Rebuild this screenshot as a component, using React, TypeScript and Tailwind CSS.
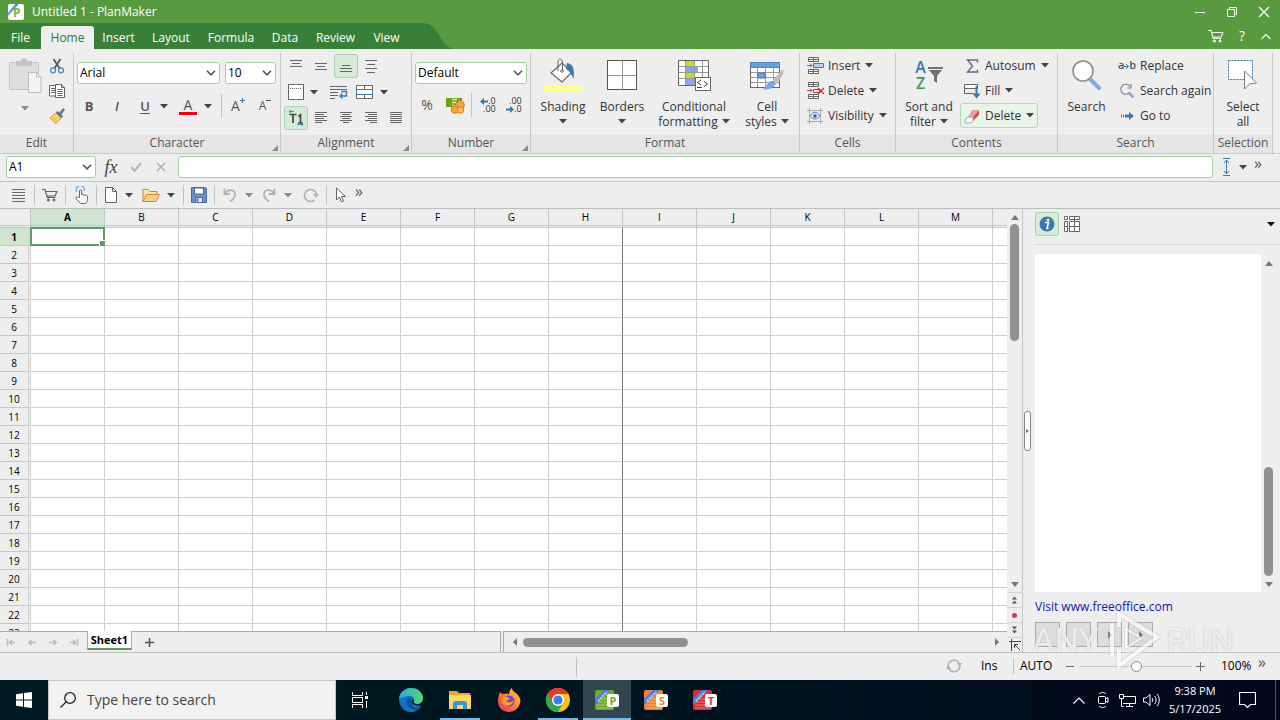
import type { ReactNode } from 'react';
import clsx from 'clsx';

const UI_FONT = "font-['Open_Sans','Noto_Sans',sans-serif]";
const COLUMNS = ['A', 'B', 'C', 'D', 'E', 'F', 'G', 'H', 'I', 'J', 'K', 'L', 'M'];
const ROWS = Array.from({ length: 23 }, (_, i) => i + 1);

const MENU_TABS = [
  { label: 'File', width: 'w-[41px]' },
  { label: 'Home', width: 'w-[53px]', active: true },
  { label: 'Insert', width: 'w-[49px]' },
  { label: 'Layout', width: 'w-14' },
  { label: 'Formula', width: 'w-16' },
  { label: 'Data', width: 'w-11' },
  { label: 'Review', width: 'w-[57px]' },
  { label: 'View', width: 'w-[45px]' },
];

interface IconProps {
  w?: number;
  h?: number;
  className?: string;
  stroke?: string;
  children: ReactNode;
}

function Icon({ w = 16, h = 16, className, stroke = '#666', children }: IconProps) {
  return (
    <svg
      width={w}
      height={h}
      viewBox={`0 0 ${w} ${h}`}
      fill="none"
      stroke={stroke}
      className={clsx('shrink-0', className)}
      aria-hidden="true"
    >
      {children}
    </svg>
  );
}

function Caret({ color = '#444' }: { color?: string }) {
  return (
    <Icon w={8} h={5} stroke="none">
      <path d="M0 0h8L4 4.5z" fill={color} />
    </Icon>
  );
}

function Chevron() {
  return (
    <Icon w={10} h={6} stroke="#555">
      <path d="M1 .8l4 4 4-4" strokeWidth="1.6" />
    </Icon>
  );
}

function Combo({ label, value, width }: { label: string; value: string; width: string }) {
  return (
    <div className={clsx('relative shrink-0', width)}>
      <select
        aria-label={label}
        defaultValue={value}
        className="block h-[22px] w-full appearance-none rounded-[3px] border border-[#a3cfa3] bg-white pl-[2px] text-xs text-black"
      >
        <option>{value}</option>
      </select>
      <span className="pointer-events-none absolute inset-y-0 right-1 flex items-center">
        <Chevron />
      </span>
    </div>
  );
}

interface ToolButtonProps {
  label: string;
  width?: string;
  active?: boolean;
  children: ReactNode;
}

function ToolButton({ label, width = 'w-6', active, children }: ToolButtonProps) {
  return (
    <button
      aria-label={label}
      className={clsx(
        'flex h-6 shrink-0 items-center justify-center rounded-[3px]',
        width,
        active && 'bg-[#d5ebd8] outline outline-[#a9d3ad] -outline-offset-1'
      )}
    >
      {children}
    </button>
  );
}

function Divider({ className }: { className?: string }) {
  return <span className={clsx('w-px shrink-0 bg-[#c2c2c2]', className)} />;
}

function Group({
  title,
  width,
  launcher,
  children,
}: {
  title: string;
  width: string;
  launcher?: boolean;
  children: ReactNode;
}) {
  return (
    <section className={clsx('flex shrink-0 flex-col border-r border-[#c8c8c8]', width)}>
      <div className="flex h-[82px] w-full">{children}</div>
      <div className="relative h-[18px] bg-[#e5e5e5] text-center text-xs leading-4 text-[#555]">
        {title}
        {launcher && (
          <span className="absolute right-[2px] bottom-[2px]">
            <Icon w={6} h={6} stroke="none">
              <path d="M6 0v6H0z" fill="#888" />
            </Icon>
          </span>
        )}
      </div>
    </section>
  );
}

function BigButton({
  lines,
  width,
  icon,
  caret = 'none',
}: {
  lines: string[];
  width: string;
  icon: ReactNode;
  caret?: 'none' | 'below' | 'inline';
}) {
  return (
    <button className={clsx('flex h-[78px] flex-col items-center text-xs leading-[15px] text-[#333]', width)}>
      <span className="mt-[3px] flex h-[38px] shrink-0 items-center justify-center">{icon}</span>
      <span className="mt-[5px] whitespace-nowrap">{lines[0]}</span>
      {lines[1] && (
        <span className="flex items-center gap-1 whitespace-nowrap">
          {lines[1]}
          {caret === 'inline' && <Caret />}
        </span>
      )}
      {caret === 'below' && (
        <span className="flex h-[15px] items-center">
          <Caret />
        </span>
      )}
    </button>
  );
}

function RowButton({
  label,
  icon,
  caret,
  active,
}: {
  label: string;
  icon: ReactNode;
  caret?: boolean;
  active?: boolean;
}) {
  return (
    <button
      className={clsx(
        'flex h-[25px] items-center gap-[5px] rounded-[3px] px-1 text-xs whitespace-nowrap text-[#333]',
        active && 'bg-[#e8f5e9] outline outline-[#b4dab7] -outline-offset-1'
      )}
    >
      <span className="flex w-4 shrink-0 justify-center">{icon}</span>
      {label}
      {caret && <Caret />}
    </button>
  );
}

// Text alignment glyph: each entry is [x1, x2, y]
function Lines({ rows }: { rows: number[][] }) {
  return (
    <Icon stroke="#666">
      {rows.map(([a, b, y]) => (
        <path key={y} d={`M${a} ${y}.5H${b}`} />
      ))}
    </Icon>
  );
}

function CartIcon({ stroke = '#666' }: { stroke?: string }) {
  return (
    <Icon stroke={stroke}>
      <path d="M0 2.500h3l2.200 8h8M3.600 4.500h11.200l-1.600 4.400-8.300.2" strokeWidth="1.200" />
      <circle cx="6.300" cy="13" r="1.100" fill={stroke} />
      <circle cx="12" cy="13" r="1.100" fill={stroke} />
    </Icon>
  );
}

function SmallArrow({ flip }: { flip?: boolean }) {
  return (
    <Icon w={8} h={7} stroke="none">
      <path d={flip ? 'M0 2.500h4V0l4 3.500L4 7V4.500H0z' : 'M8 2.500H4V0L0 3.500 4 7V4.500h4z'} fill="#3b78ad" />
    </Icon>
  );
}

function Ribbon() {
  return (
    <div className="flex shrink-0 overflow-hidden border-b border-[#b5d8b5] bg-[#eee] pt-1">
      <Group title="Edit" width="w-[74px]">
        <button aria-label="Paste" className="ml-2 flex w-[34px] shrink-0 flex-col items-center pt-[5px]">
          <Icon w={34} h={36} stroke="#c4c4c4">
            <rect x="1.500" y="4.500" width="29" height="27" rx="1" fill="#dedede" />
            <path d="M8 3h5c0-4 6-4 6 0h5v5H8z" fill="#c6c6c6" stroke="none" />
            <path d="M20.500 14.500h8l4.500 4.500v15.500H20.500z" fill="#f5f5f5" stroke="#bbb" />
            <path d="M28.500 14.500v4.500h4.500" stroke="#bbb" />
          </Icon>
          <span className="mt-3">
            <Caret color="#888" />
          </span>
        </button>
        <div className="ml-[3px] flex flex-col gap-px pt-px">
          <ToolButton label="Cut">
            <Icon>
              <path d="M4.500 1l6.200 9.500M11.500 1L5.300 10.500" stroke="#555" strokeWidth="1.700" />
              <circle cx="4" cy="12.300" r="2.500" stroke="#4a88b8" strokeWidth="1.300" />
              <circle cx="12" cy="12.300" r="2.500" stroke="#4a88b8" strokeWidth="1.300" />
            </Icon>
          </ToolButton>
          <ToolButton label="Copy">
            <Icon>
              <path d="M.5 2.500h7v10.500h-7z" fill="#fff" />
              <path d="M2 5.500h4M2 7.500h4M2 9.500h4" />
              <path d="M6.500 1.500h6l3 3v10h-9z" fill="#fff" />
              <path d="M12.500 1.500v3h3M8.500 6.500h5M8.500 8.500h5M8.500 10.500h5M8.500 12.500h5" />
            </Icon>
          </ToolButton>
          <ToolButton label="Format painter">
            <Icon>
              <path d="M1 10L7 5l5 5-5 5.500z" fill="#f8d27c" stroke="#c8993a" />
              <path d="M2 11l4 4M4 9l4 4" stroke="#e5ae4a" />
              <path d="M7 4.500l1.500-1.500 5.500 5.500-1.500 1.500z" fill="#666" stroke="none" />
              <path d="M10.500 4.500L14.500.5l1 1-3.500 5z" fill="#4e84b0" stroke="#4e84b0" />
            </Icon>
          </ToolButton>
        </div>
      </Group>

      <Group title="Character" width="w-[207px]" launcher>
        <div className="flex flex-col px-[3px] pt-[9px]">
          <div className="flex gap-[5px]">
            <Combo label="Font" value="Arial" width="w-[143px]" />
            <Combo label="Font size" value="10" width="w-[51px]" />
          </div>
          <div className="mt-[10px] flex items-center text-sm font-semibold text-[#555]">
            <ToolButton label="Bold">
              <span className="text-[13px] font-bold">B</span>
            </ToolButton>
            <span className="ml-1">
              <ToolButton label="Italic">
                <span className="text-[13px] italic">I</span>
              </ToolButton>
            </span>
            <span className="ml-1 flex">
              <ToolButton label="Underline">
                <span className="text-[13px] underline underline-offset-2">U</span>
              </ToolButton>
              <ToolButton label="Underline options" width="w-[14px]">
                <Caret />
              </ToolButton>
            </span>
            <span className="ml-1 flex">
              <ToolButton label="Font color" width="w-[26px]">
                <span className="flex w-[18px] justify-center border-b-[3px] border-[#f0000f] text-sm leading-[14px] font-medium">
                  A
                </span>
              </ToolButton>
              <ToolButton label="Font color options" width="w-[14px]">
                <Caret />
              </ToolButton>
            </span>
            <Divider className="ml-[6px] h-6" />
            <span className="ml-1 flex gap-[3px] font-medium">
              <ToolButton label="Increase font size">
                <span className="text-sm">A</span>
                <Icon w={5} h={5} stroke="#3b78ad" className="mb-3">
                  <path d="M2.500 0v5M0 2.500h5" />
                </Icon>
              </ToolButton>
              <ToolButton label="Decrease font size">
                <span className="text-xs">A</span>
                <Icon w={5} h={5} stroke="#555" className="mb-3">
                  <path d="M0 2.500h5" />
                </Icon>
              </ToolButton>
            </span>
          </div>
        </div>
      </Group>

      <Group title="Alignment" width="w-[131px]" launcher>
        <div className="flex flex-col gap-[2px] pt-px pl-[3px]">
          <div className="flex gap-px">
            <ToolButton label="Align top">
              <Lines rows={[[2, 14, 2], [4, 12, 5], [2, 14, 8]]} />
            </ToolButton>
            <ToolButton label="Align middle">
              <Lines rows={[[2, 14, 5], [4, 12, 8], [2, 14, 11]]} />
            </ToolButton>
            <ToolButton label="Align bottom" active>
              <Lines rows={[[4, 12, 7], [2, 14, 10], [2, 14, 13]]} />
            </ToolButton>
            <ToolButton label="Distribute">
              <Lines rows={[[2, 14, 2], [4, 12, 6], [2, 14, 10], [4, 12, 14]]} />
            </ToolButton>
          </div>
          <div className="flex">
            <ToolButton label="Cell borders">
              <Icon>
                <rect x=".5" y=".5" width="15" height="15" fill="#fff" />
                <path d="M2 4.500h12" strokeDasharray="1 1" />
              </Icon>
            </ToolButton>
            <ToolButton label="Cell borders options" width="w-3">
              <Caret />
            </ToolButton>
            <span className="ml-[7px] flex gap-px">
              <ToolButton label="Wrap text">
                <Icon w={18}>
                  <path d="M0 2.500h17M0 5.500h17M0 8.500h8M0 11.500h8M0 14.500h5" />
                  <path d="M11 7.500h5.500v4.500H10M12.500 9.500L10 12l2.500 2.500" stroke="#3b78ad" strokeWidth="1.300" />
                </Icon>
              </ToolButton>
              <ToolButton label="Merge cells">
                <Icon w={17}>
                  <rect x=".5" y="1.500" width="16" height="13" fill="#fff" />
                  <path d="M8.500 2v4M8.500 10v4" />
                  <path d="M.5 5.500h16v5H.5z" stroke="#3b78ad" />
                </Icon>
              </ToolButton>
            </span>
            <span className="ml-[2px]">
              <ToolButton label="Merge options" width="w-3">
                <Caret />
              </ToolButton>
            </span>
          </div>
          <div className="flex gap-px">
            <ToolButton label="Text direction" active>
              <Icon stroke="#444">
                <path d="M1.500 4.500h7M5 4.500V13" strokeWidth="1.700" />
                <path d="M10.500 6.500l2-1.500V13M10 13h5" strokeWidth="1.700" />
                <path d="M1 1.500h5M3 0L1 1.500 3 3M9 14.500h6M13.500 13l1.500 1.500-1.500 1.500" stroke="#3b8dc8" />
              </Icon>
            </ToolButton>
            <ToolButton label="Align left">
              <Lines rows={[[2, 14, 2], [2, 11, 4], [2, 14, 6], [2, 11, 8], [2, 14, 10], [2, 9, 12]]} />
            </ToolButton>
            <ToolButton label="Center">
              <Lines rows={[[2, 14, 2], [4, 12, 4], [2, 14, 6], [4, 12, 8], [2, 14, 10], [5, 11, 12]]} />
            </ToolButton>
            <ToolButton label="Align right">
              <Lines rows={[[2, 14, 2], [5, 14, 4], [2, 14, 6], [5, 14, 8], [2, 14, 10], [7, 14, 12]]} />
            </ToolButton>
            <ToolButton label="Justify">
              <Lines rows={[[2, 14, 2], [2, 14, 4], [2, 14, 6], [2, 14, 8], [2, 14, 10], [2, 14, 12]]} />
            </ToolButton>
          </div>
        </div>
      </Group>

      <Group title="Number" width="w-[119px]" launcher>
        <div className="flex flex-col px-[3px] pt-[9px]">
          <Combo label="Number format" value="Default" width="w-[112px]" />
          <div className="mt-[9px] flex items-center">
            <ToolButton label="Percent">
              <span className="text-sm text-[#555]">%</span>
            </ToolButton>
            <span className="ml-1">
              <ToolButton label="Currency">
                <Icon w={19} h={17} stroke="none">
                  <rect y="1" width="16" height="9" fill="#6aa516" />
                  <path d="M6 2.500h5M6 5.500h4M6 8.500h5" stroke="#d8edb4" strokeWidth="1.400" />
                  <circle cx="14" cy="8" r="4.300" fill="#f2a33a" stroke="#d9791a" />
                  <circle cx="9" cy="12.500" r="3.800" fill="#f2a33a" stroke="#d9791a" />
                  <circle cx="14.500" cy="13" r="3.200" fill="#f8bd5c" stroke="#d9791a" />
                </Icon>
              </ToolButton>
            </span>
            <Divider className="ml-1 h-6" />
            <span className="ml-1 flex gap-[2px] text-[9px] leading-[8px] text-[#333]">
              <ToolButton label="Add decimal place">
                <span className="flex flex-col items-end">
                  <span className="flex items-center"><SmallArrow />.0</span>
                  <span>.00</span>
                </span>
              </ToolButton>
              <ToolButton label="Remove decimal place">
                <span className="flex flex-col items-end">
                  <span>.00</span>
                  <span className="flex items-center"><SmallArrow flip />.0</span>
                </span>
              </ToolButton>
            </span>
          </div>
        </div>
      </Group>

      <Group title="Format" width="w-[269px]">
        <div className="flex gap-px px-[3px]">
          <BigButton
            lines={['Shading']}
            width="w-[58px]"
            caret="below"
            icon={
              <Icon w={38} h={34}>
                <path d="M7 15L18 5l10 9-10 10z" fill="#fff" strokeWidth="1.200" />
                <path d="M23 5c6 1 8 6 6.500 16-2-5-4-8-7.500-10z" fill="#3b78ad" stroke="none" />
                <path d="M14 13V4c0-4 4-4 4.500 0v8" />
                <circle cx="18" cy="13" r="1.300" />
                <rect y="28" width="38" height="6" fill="#ffff8c" stroke="none" />
              </Icon>
            }
          />
          <BigButton
            lines={['Borders']}
            width="w-[58px]"
            caret="below"
            icon={
              <Icon w={30} h={30}>
                <rect x=".5" y=".5" width="29" height="29" fill="#fff" stroke="#555" />
                <path d="M15.500 1v28M1 15.500h28" stroke="#999" />
              </Icon>
            }
          />
          <BigButton
            lines={['Conditional', 'formatting']}
            width="w-[84px]"
            caret="inline"
            icon={
              <Icon w={34} h={32}>
                <rect x="1.500" y="1.500" width="30" height="25" fill="#fff" />
                <path d="M9 2h8v6H9zM9 14h8v6H9z" fill="#bfdc2c" stroke="none" />
                <path d="M9 8h12v6H9zM9 20h8v6H9z" fill="#84a8ec" stroke="none" />
                <path d="M8.500 2v24M17.500 2v24M25.500 2v24M2 7.500h29M2 13.500h29M2 19.500h29" stroke="#999" />
                <rect x="18.500" y="18.500" width="15" height="13" fill="#fff" />
                <path d="M24 21l-3.500 2.500L24 26M20 28.500h5M27 22.500l3.500 2.500-3.500 2.500" stroke="#444" />
              </Icon>
            }
          />
          <BigButton
            lines={['Cell', 'styles']}
            width="w-[60px]"
            caret="inline"
            icon={
              <Icon w={34} h={32}>
                <rect x=".5" y="3.500" width="29" height="25" fill="#fff" />
                <rect x=".5" y="3.500" width="29" height="5" fill="#6aa0dc" stroke="#4c80ba" />
                <path d="M7.500 9v19M15.500 9v19M23.500 9v19M1 13.500h28M1 18.500h28M1 23.500h28" stroke="#999" />
                <rect x="8" y="14" width="7" height="5" fill="#6ea2e6" stroke="#3b78ad" />
                <path d="M22 23l7-9c2-2.500 4-3.500 4.500-3.500.5 4-1 6.500-3 8.500l-5 7z" fill="#bdbdbd" stroke="none" />
                <path d="M12 30c4 0 5-8 10-8 4 0 4 4 1 6-3 2.500-7 3-11 2z" fill="#7f9ff0" stroke="none" />
              </Icon>
            }
          />
        </div>
      </Group>

      <Group title="Cells" width="w-24">
        <div className="flex flex-col pl-[3px]">
          <RowButton
            label="Insert"
            caret
            icon={
              <Icon w={17} h={17}>
                <path d="M1.500.5h10v4h-10zM1.500 12.500h10v4h-10zM6.500.5v4M6.500 12.500v4M1.500 2.500h10M1.500 14.500h10" fill="#fff" />
                <path d="M6.500 6.500h10v4h-10z" fill="#b7d1ea" stroke="#3b78ad" />
                <path d="M0 8.500h5M3 6.500l2 2-2 2" stroke="#3b78ad" />
              </Icon>
            }
          />
          <RowButton
            label="Delete"
            caret
            icon={
              <Icon w={17} h={17}>
                <path d="M1.500.5h10v4h-10zM1.500 12.500h10v4h-10zM6.500.5v4M6.500 12.500v4M1.500 2.500h10M1.500 14.500h10" fill="#fff" />
                <path d="M6.500 7.500h6v3h-6zM0 8.500h5M3 6.500l2 2-2 2" stroke="#c0404d" />
                <path d="M11 6l6 6M17 6l-6 6" stroke="#d22c40" strokeWidth="1.400" />
              </Icon>
            }
          />
          <RowButton
            label="Visibility"
            caret
            icon={
              <Icon>
                <path d="M0 2.500h16M0 13.500h16M2.500 0v16M13.500 0v16" stroke="#aaa" />
                <path d="M3 8c3-5 7-5 10 0-3 4-7 4-10 0z" fill="#dce9f7" stroke="#4e7fb4" />
                <circle cx="8" cy="8" r="1.800" fill="#3b5f9a" stroke="none" />
              </Icon>
            }
          />
        </div>
      </Group>

      <Group title="Contents" width="w-[162px]">
        <div className="flex pl-[2px]">
          <BigButton
            lines={['Sort and', 'filter']}
            width="w-[62px]"
            caret="inline"
            icon={
              <span className="flex items-center">
                <span className="flex flex-col text-base leading-4 font-semibold">
                  <span className="text-[#3b78ad]">A</span>
                  <span className="text-[#3f9b47]">Z</span>
                </span>
                <Icon w={15} h={16} className="ml-[2px]" stroke="none">
                  <path d="M0 0h15v2H0zM1 3h13L9 9v7l-3-2V9z" fill="#707070" />
                </Icon>
              </span>
            }
          />
          <div className="flex flex-col items-start">
            <RowButton
              label="Autosum"
              caret
              icon={
                <Icon w={13} h={14}>
                  <path d="M11.500 3.500V1H1.500l5 6-5 6h10v-2.500" stroke="#65688a" strokeWidth="1.400" />
                </Icon>
              }
            />
            <RowButton
              label="Fill"
              caret
              icon={
                <Icon>
                  <rect x=".5" y="1.500" width="13" height="4" fill="#fff" />
                  <path d="M.5 5v5.500h9" />
                  <path d="M12.500 3v9" stroke="#3b78ad" strokeWidth="2" />
                  <path d="M8.500 10.500h8l-4 5z" fill="#3b78ad" stroke="none" />
                </Icon>
              }
            />
            <RowButton
              label="Delete"
              caret
              active
              icon={
                <Icon>
                  <path d="M8 2h7L9 9H4z" fill="#f09a9c" stroke="none" />
                  <path d="M15 2v5l-6 6V9z" fill="#c9575c" stroke="none" />
                  <path d="M4 9h5v4l-2 2H1v-3z" fill="#f6f6fa" stroke="#aaa" />
                </Icon>
              }
            />
          </div>
        </div>
      </Group>

      <Group title="Search" width="w-[156px]">
        <div className="flex">
          <BigButton
            lines={['Search']}
            width="w-[57px]"
            icon={
              <Icon w={30} h={32}>
                <path d="M19 21l8 8" stroke="#86a5f0" strokeWidth="4" strokeLinecap="round" />
                <circle cx="11" cy="12" r="10" fill="#fff" stroke="#8d8d8d" strokeWidth="1.600" />
              </Icon>
            }
          />
          <div className="flex flex-col items-start">
            <RowButton
              label="Replace"
              icon={
                <span className="flex items-center text-[11px] font-semibold text-[#4b5a68]">
                  a
                  <Icon w={5} h={6} stroke="#3b78ad"><path d="M0 3.500h4M2 1l2.500 2.500L2 6" /></Icon>
                  b
                </span>
              }
            />
            <RowButton
              label="Search again"
              icon={
                <Icon>
                  <path d="M10 10l4.500 4.500" stroke="#86a5f0" strokeWidth="2.500" />
                  <path d="M11 3.500A5 5 0 1 0 11 9M12 1v4H8" stroke="#888" strokeWidth="1.200" />
                </Icon>
              }
            />
            <RowButton
              label="Go to"
              icon={
                <Icon stroke="#3b78ad">
                  <path d="M2.500 6.500v3M4.500 6.500v3" />
                  <path d="M6 8h6" strokeWidth="3" />
                  <path d="M10 4l5 4-5 4z" fill="#3b78ad" stroke="none" />
                </Icon>
              }
            />
          </div>
        </div>
      </Group>

      <Group title="Selection" width="w-[59px]">
        <BigButton
          lines={['Select', 'all']}
          width="w-[58px]"
          icon={
            <Icon w={32} h={32}>
              <rect x="1.500" y="1.500" width="24" height="19" fill="#fff" stroke="#3b78ad" strokeDasharray="2 1" />
              <path d="M17.500 12l12 12-7 1-5 5z" fill="#fff" stroke="#777" />
            </Icon>
          }
        />
      </Group>
    </div>
  );
}

function Header() {
  return (
    <header className="shrink-0 bg-[#579a40] text-xs text-white">
      <div className="flex h-[23px] items-center justify-between pl-2">
        <div className="flex items-center gap-2">
          <Icon stroke="none">
            <rect width="16" height="16" rx="2" fill="#fff" />
            <path d="M0 9L7 0h4L0 12z" fill="#6792dc" />
            <text x="5" y="13" fontSize="12" fontWeight="bold" fill="#79b62c" fontFamily="Open Sans">P</text>
          </Icon>
          <h1>Untitled 1 - PlanMaker</h1>
        </div>
        <div className="flex">
          <button aria-label="Minimize" className="flex w-8 justify-center">
            <Icon w={12} h={12} stroke="#fff"><path d="M1 6.500h10" /></Icon>
          </button>
          <button aria-label="Restore" className="flex w-8 justify-center">
            <Icon w={12} h={12} stroke="#fff"><path d="M1.500 3.500h7v7h-7zM3.500 3V1.500h7v7H9" /></Icon>
          </button>
          <button aria-label="Close" className="flex w-8 justify-center">
            <Icon w={12} h={12} stroke="#fff"><path d="M1 1l10 10M11 1L1 11" strokeWidth="1.300" /></Icon>
          </button>
        </div>
      </div>
      <div className="flex h-[26px] items-end">
        <nav className="flex h-full items-end bg-[#388038]">
          {MENU_TABS.map((tab) => (
            <button
              key={tab.label}
              className={clsx(
                'h-[23px] rounded-t-[3px]',
                tab.width,
                tab.active && 'bg-[#eee] text-[#2f7434]'
              )}
            >
              {tab.label}
            </button>
          ))}
        </nav>
        <Icon w={47} h={26} stroke="none">
          <path d="M0 0h12c12 0 15 7 20 15 4 7 8 11 15 11H0z" fill="#388038" />
        </Icon>
        <div className="ml-auto flex h-full items-center gap-[10px] pr-2">
          <button aria-label="Shop"><CartIcon stroke="#eaf5e4" /></button>
          <button aria-label="Help" className="w-4 text-sm">?</button>
          <button aria-label="Collapse ribbon" className="flex w-3 justify-center">
            <Icon w={12} h={7} stroke="#eaf5e4"><path d="M1.500 6L6 1.500 10.500 6" strokeWidth="1.400" /></Icon>
          </button>
        </div>
      </div>
    </header>
  );
}

function FormulaBar() {
  return (
    <div className="flex h-7 shrink-0 items-center border-b border-[#c4c4c4] bg-[#eee] pb-px pl-[6px]">
      <Combo label="Cell address" value="A1" width="w-[90px]" />
      <span className="ml-[3px] flex gap-px">
        <ToolButton label="Insert function">
          <span className="font-['Liberation_Serif',serif] text-lg text-[#444] italic">fx</span>
        </ToolButton>
        <ToolButton label="Accept">
          <Icon w={12} h={12} stroke="#b5b5b5"><path d="M1 6l3.500 4L11 2" strokeWidth="2" /></Icon>
        </ToolButton>
        <ToolButton label="Cancel">
          <Icon w={10} h={10} stroke="#b5b5b5"><path d="M1 1l8 8M9 1L1 9" strokeWidth="1.700" /></Icon>
        </ToolButton>
      </span>
      <input
        aria-label="Formula"
        className="ml-[5px] h-[22px] min-w-0 flex-1 rounded-[3px] border border-[#a3cfa3] bg-white px-1 text-xs"
      />
      <div className="flex w-[67px] items-center pl-px">
        <ToolButton label="Expand formula bar">
          <Icon w={9} h={18} stroke="#3b78ad">
            <path d="M1 .5h7M1 17.500h7M4.500 2v14M2 5l2.500-3L7 5M2 13l2.500 3L7 13" />
          </Icon>
        </ToolButton>
        <ToolButton label="Expand options" width="w-[10px]"><Caret /></ToolButton>
        <span className="ml-[6px] pb-2 text-base leading-4 text-[#555]">»</span>
      </div>
    </div>
  );
}

function QuickBar() {
  return (
    <div className="flex h-[27px] shrink-0 items-center border-b border-[#bcbcbc] bg-[#eee] pl-[6px]">
      <ToolButton label="Menu">
        <Icon>
          <path d="M2 2.500h13M2 5.500h13M2 8.500h13M2 11.500h13M2 14.500h13" />
        </Icon>
      </ToolButton>
      <Divider className="mx-1 h-5" />
      <ToolButton label="Shop" width="w-[22px]"><CartIcon /></ToolButton>
      <Divider className="mx-1 h-5" />
      <ToolButton label="Touch mode" width="w-[22px]">
        <Icon w={15} h={18}>
          <path d="M3 6a4 4 0 1 1 7-1" stroke="#6d9be0" strokeWidth="1.200" />
          <path d="M5.500 11.500V5c0-1.500 2-1.500 2 0v4c0-1.200 2-1.200 2 0v.5c.3-1 2-1 2 0v.5c.4-1 2-.7 2 .5v3c0 2-1 3-2 4H6.500L2 12.500c-.8-1.300.7-2 1.500-1.200z" fill="#fff" />
        </Icon>
      </ToolButton>
      <Divider className="mx-1 h-5" />
      <ToolButton label="New" width="w-5">
        <Icon w={12}>
          <path d="M.5.5h7l4 4v11H.5zM7.500.5v4h4" fill="#fff" />
        </Icon>
      </ToolButton>
      <ToolButton label="New options" width="w-4"><Caret /></ToolButton>
      <ToolButton label="Open" width="w-7">
        <Icon w={18} h={15} stroke="#c8893a">
          <path d="M1 13.500V1.500h5l2 2h7v3" fill="#fbe3b3" />
          <path d="M1 13.500L4.500 6.500h13l-3.500 7z" fill="#f9cf82" />
        </Icon>
      </ToolButton>
      <ToolButton label="Open options" width="w-3"><Caret /></ToolButton>
      <Divider className="mx-1 ml-[6px] h-5" />
      <ToolButton label="Save" width="w-[22px]">
        <Icon>
          <path d="M.5.5h14l1 1v14H.5z" fill="#6f8dc8" stroke="#4a66a0" />
          <path d="M3.500 1v6h9V1z" fill="#fff" stroke="#4a66a0" />
          <path d="M4.500 15.500v-5h7v5z" fill="#e4e9f4" stroke="#4a66a0" />
          <path d="M6.500 11.500v3" stroke="#4a66a0" strokeWidth="2" />
        </Icon>
      </ToolButton>
      <Divider className="mx-1 h-5" />
      <ToolButton label="Undo" width="w-[22px]">
        <Icon stroke="#b2b2b2">
          <path d="M2.500 1.500v5.500H8M2.500 6.500C6 1.500 13 2 13 7.500c0 4-3 5.500-5 7" strokeWidth="1.800" />
        </Icon>
      </ToolButton>
      <ToolButton label="Undo options" width="w-4"><Caret color="#888" /></ToolButton>
      <ToolButton label="Redo">
        <Icon stroke="#b2b2b2">
          <path d="M13.500 1.500v5.500H8M13.500 6.500C10 1.500 3 2 3 7.500c0 4 3 5.500 5 7" strokeWidth="1.800" />
        </Icon>
      </ToolButton>
      <ToolButton label="Redo options" width="w-[14px]"><Caret color="#888" /></ToolButton>
      <ToolButton label="Repeat" width="w-[31px]">
        <Icon stroke="#b2b2b2">
          <path d="M11.500 13A6 6 0 1 1 13.500 8" strokeWidth="1.700" />
          <path d="M10 7h6l-3 4z" fill="#b2b2b2" stroke="none" />
        </Icon>
      </ToolButton>
      <Divider className="h-5" />
      <ToolButton label="Select objects" width="w-7">
        <Icon w={12}>
          <path d="M1.500 1v12l3-3 2 5 2-1-2-4.500h4z" fill="#fff" stroke="#666" />
        </Icon>
      </ToolButton>
      <span className="pb-2 text-base leading-4 text-[#555]">»</span>
    </div>
  );
}

function Sheet() {
  return (
    <div className="min-h-0 flex-1 overflow-hidden bg-white">
      <table className="w-full table-fixed border-separate border-spacing-0 text-[10px] leading-3">
        <thead>
          <tr>
            <th className="h-[19px] w-[31px] border-r border-b-3 border-double border-[#c6c6c6] bg-[#eee] p-0" />
            {COLUMNS.map((col) => (
              <th
                key={col}
                className={clsx(
                  'w-[74px] border-r border-b-3 border-[#c6c6c6] p-0 text-black [border-bottom-style:double]',
                  col === 'A' ? 'bg-[#cfe5d1] font-bold' : 'bg-[#eee] font-medium'
                )}
              >
                {col}
              </th>
            ))}
            <th className="border-b-3 border-double border-[#c6c6c6] bg-[#eee] p-0" />
          </tr>
        </thead>
        <tbody>
          {ROWS.map((row) => (
            <tr key={row}>
              <th
                className={clsx(
                  'h-[18px] border-r-3 border-b border-r-[#d0d0d0] border-b-[#c6c6c6] p-0 text-black [border-right-style:double]',
                  row === 1 ? 'bg-[#cfe5d1] font-bold' : 'bg-[#eee] font-medium'
                )}
              >
                {row}
              </th>
              {COLUMNS.map((col) => (
                <td
                  key={col}
                  className={clsx(
                    'relative border-r border-b border-b-[#cfcfcf] p-0',
                    col === 'H' ? 'border-r-[#777]' : 'border-r-[#cfcfcf]'
                  )}
                >
                  {row === 1 && col === 'A' && (
                    <span className="absolute -inset-px border-2 border-[#5c9a5f]">
                      <span className="absolute -right-[2px] -bottom-[2px] size-[6px] border-t border-l border-white bg-[#5c9a5f]" />
                    </span>
                  )}
                </td>
              ))}
              <td className="border-b border-[#cfcfcf] p-0" />
            </tr>
          ))}
        </tbody>
      </table>
    </div>
  );
}

function Arrow({ dir }: { dir: 'up' | 'down' | 'left' | 'right' }) {
  const paths = {
    up: 'M0 7h8L4 2z',
    down: 'M0 2h8L4 7z',
    left: 'M6 0v8L2 4z',
    right: 'M2 0v8l4-4z',
  };
  return (
    <Icon w={8} h={8} stroke="none">
      <path d={paths[dir]} fill="#777" />
    </Icon>
  );
}

function SheetTabs() {
  const nav = [
    { label: 'First sheet', d: 'M1.500 1v7M9 4.500H4M6 2L3.500 4.500 6 7' },
    { label: 'Previous sheet', d: 'M9 4.500H2M4.500 2L2 4.500 4.500 7' },
    { label: 'Next sheet', d: 'M1 4.500h7M5.500 2L8 4.500 5.500 7' },
    { label: 'Last sheet', d: 'M8.500 1v7M1 4.500h5M4 2l2.500 2.500L4 7' },
  ];
  return (
    <div className="flex h-[22px] shrink-0 border-b border-[#c0c0c0] bg-[#eee]">
      <div className="flex w-[501px] shrink-0 border-t border-r border-[#aaa]">
        <div className="flex w-[87px] shrink-0">
          {nav.map((item) => (
            <button key={item.label} aria-label={item.label} className="flex w-[21px] items-center justify-center">
              <Icon w={10} h={9} stroke="#bbb">
                <path d={item.d} strokeWidth="1.600" />
              </Icon>
            </button>
          ))}
        </div>
        <button className="-mt-px mb-[2px] w-[45px] border-x border-b-2 border-x-[#aaa] border-b-[#5c9a5f] bg-white text-[11px] leading-4 font-bold text-black">
          Sheet1
        </button>
        <button aria-label="Add sheet" className="flex w-[34px] items-center justify-center">
          <Icon w={9} h={9} stroke="#555"><path d="M4.500 0v9M0 4.500h9" strokeWidth="1.500" /></Icon>
        </button>
      </div>
      <div className="ml-[2px] flex min-w-0 flex-1 items-center border-t border-l border-[#aaa] pr-[6px] pl-[7px]">
        <Arrow dir="left" />
        <div className="ml-1 flex-1">
          <div className="h-[9px] w-[35%] rounded-full bg-[#919191]" />
        </div>
        <Arrow dir="right" />
      </div>
    </div>
  );
}

function VerticalScroll() {
  const cell = 'flex h-[15px] items-center justify-center border-t border-[#d4d4d4]';
  return (
    <div className="flex w-[15px] shrink-0 flex-col border-b border-[#c0c0c0] bg-[#eee]">
      <div className="flex h-[15px] items-center justify-center"><Arrow dir="up" /></div>
      <div className="flex flex-1 justify-center">
        <div className="h-1/3 w-[9px] rounded-full bg-[#919191]" />
      </div>
      <div className="flex h-4 items-center justify-center"><Arrow dir="down" /></div>
      <button aria-label="Previous page" className={cell}>
        <Icon w={7} h={8} stroke="none"><path d="M1 3.500h5l-2.500-3zM1 7.500h5L3.500 4.500z" fill="#555" /></Icon>
      </button>
      <button aria-label="Browse by" className={cell}>
        <span className="size-[5px] rounded-full bg-[#d4374f]" />
      </button>
      <button aria-label="Next page" className={cell}>
        <Icon w={7} h={8} stroke="none"><path d="M1 .5h5l-2.500 3zM1 4.500h5l-2.500 3z" fill="#555" /></Icon>
      </button>
      <button aria-label="Go to corner" className={cell}>
        <Icon w={12} h={12} stroke="#444"><path d="M0 2.500h12M2.500 0v12M5.500 9V5.500H9M6 6l5 5" /></Icon>
      </button>
    </div>
  );
}

function Watermark() {
  return (
    <div className="pointer-events-none absolute right-[46px] -bottom-[19px] flex items-center gap-[5px] font-['Liberation_Sans_Narrow','Roboto',sans-serif] text-[34px] leading-[48px] text-white/70 [text-shadow:0_0_2px_#bbb]">
      <span>ANY</span>
      <Icon w={58} h={62} stroke="#fff" className="opacity-70 drop-shadow-[0_0_1px_#aaa]">
        <path d="M8 14v34M15 18V5l38 23-38 29V40" strokeWidth="4" />
        <path d="M22 20v19l15-10z" strokeWidth="2" />
      </Icon>
      <span>RUN</span>
    </div>
  );
}

function SidePanel() {
  return (
    <aside className="relative z-10 flex w-[258px] shrink-0 border-b border-l border-[#c4c4c4] bg-[#eee]">
      <div className="flex w-3 shrink-0 items-center">
        <button aria-label="Toggle sidebar" className="ml-px flex h-10 w-[7px] items-center justify-center rounded-[3px] border border-[#888] bg-white">
          <Icon w={4} h={6} stroke="none"><path d="M0 1l3 2-3 2z" fill="#777" /></Icon>
        </button>
      </div>
      <div className="flex min-w-0 flex-1 flex-col">
        <div className="mt-[3px] flex h-[33px] shrink-0 items-start border-b border-[#d6d6d6] pr-[5px]">
          <ToolButton label="Information" active>
            <Icon stroke="none">
              <circle cx="8" cy="8" r="7.500" fill="#3b78ad" />
              <circle cx="9" cy="4" r="1.300" fill="#fff" />
              <path d="M6 6.500h3.500l-1.500 6h1.500" stroke="#fff" strokeWidth="1.600" />
            </Icon>
          </ToolButton>
          <span className="ml-[1px]">
            <ToolButton label="Table">
              <Icon stroke="#666">
                <path d="M.5.5h3v3h-3zM5.500.5h10v3h-10zM.5 5.500h3v10h-3zM5.500 5.500h10v10h-10zM5.500 10.500h10M10.500.5v15M.5 10.500h3" fill="#fff" />
              </Icon>
            </ToolButton>
          </span>
          <span className="ml-auto flex h-6 items-center"><Caret color="#111" /></span>
        </div>
        <div className="mt-[9px] flex min-h-0 flex-1">
          <div className="flex-1 bg-white" />
          <div className="mr-1 flex w-[15px] shrink-0 flex-col items-center justify-between">
            <span className="flex h-[18px] items-center"><Arrow dir="up" /></span>
            <div className="flex w-[9px] flex-1 flex-col justify-end">
              <div className="h-[109px] rounded-full bg-[#919191]" />
            </div>
            <span className="flex h-4 items-center"><Arrow dir="down" /></span>
          </div>
        </div>
        <a href="#freeoffice" className="mt-[7px] text-xs leading-4 text-[#1212b8]">Visit www.freeoffice.com</a>
        <div className="mt-[7px] mb-[5px] flex gap-[6px]">
          {['First tip', 'Previous tip', 'Next tip', 'Last tip'].map((label, i) => (
            <button
              key={label}
              aria-label={label}
              className="flex h-[25px] w-[25px] items-center justify-center border border-[#aaa] bg-[#ddd]"
            >
              {i > 1 && <Arrow dir="right" />}
            </button>
          ))}
        </div>
      </div>
      <Watermark />
    </aside>
  );
}

function StatusBar() {
  return (
    <footer className="flex h-[27px] shrink-0 items-center justify-end bg-[#eee] text-xs text-black">
      <div className="flex flex-1 justify-end">
        <Divider className="h-5" />
      </div>
      <div className="flex w-[703px] shrink-0 items-center pb-px">
        <Icon className="ml-[369px]" stroke="#b0b0b0">
          <path d="M2 8a6 6 0 0 1 11-3M14 8a6 6 0 0 1-11 3" strokeWidth="1.500" />
          <path d="M11 5h5l-2.500 4zM0 11h5L2.500 7z" fill="#b0b0b0" stroke="none" />
        </Icon>
        <span className="ml-[19px] w-8">Ins</span>
        <Divider className="h-4" />
        <span className="ml-[6px] w-[46px]">AUTO</span>
        <button aria-label="Zoom out" className="flex w-3">
          <Icon w={9} h={9}><path d="M0 4.500h8" /></Icon>
        </button>
        <input
          type="range"
          aria-label="Zoom"
          defaultValue={50}
          className="mx-[2px] h-3 w-28 shrink-0 appearance-none bg-[linear-gradient(#c6c6c6,#c6c6c6)] bg-[length:100%_1px] bg-center bg-no-repeat [&::-webkit-slider-thumb]:size-[11px] [&::-webkit-slider-thumb]:appearance-none [&::-webkit-slider-thumb]:rounded-full [&::-webkit-slider-thumb]:border [&::-webkit-slider-thumb]:border-[#888] [&::-webkit-slider-thumb]:bg-white"
        />
        <button aria-label="Zoom in" className="ml-[2px] flex w-[25px]">
          <Icon w={9} h={9}><path d="M0 4.500h9M4.500 0v9" /></Icon>
        </button>
        <span className="w-[37px]">100%</span>
        <span className="pb-2 text-base leading-4 text-[#555]">»</span>
      </div>
    </footer>
  );
}

function SoftMakerIcon({ letter, color }: { letter: string; color: string }) {
  return (
    <Icon w={24} h={22} stroke="none">
      <rect y="1" width="19" height="20" rx="2" fill={color} />
      <path d="M2 13h16M2 16h16M2 19h16M2 10h16" stroke="#fff" strokeOpacity=".35" />
      <path d="M0 10L9 1h6L0 16z" fill="#527ade" />
      <path d="M3 12l9-9" stroke="#c4d4fb" strokeWidth="2" strokeDasharray="2 1" />
      <rect x="12" y="5" width="12" height="13" rx="2" fill="#fff" />
      <text x="18" y="15.500" fontSize="11" fontWeight="bold" textAnchor="middle" fill={color} fontFamily="Open Sans">
        {letter}
      </text>
    </Icon>
  );
}

const TASKBAR_APPS = [
  {
    name: 'Edge',
    icon: (
      <Icon w={24} h={24} stroke="none">
        <defs>
          <linearGradient id="edge-top" x1="0" x2="1">
            <stop stopColor="#2aa7e0" />
            <stop offset="1" stopColor="#5ad66a" />
          </linearGradient>
        </defs>
        <path d="M0 11C0 5 5 0 12 0c7 0 12 5 12 10 0 4-3 6-6 6l4 2c-2 4-6 6-10 6C5 24 0 18 0 11z" fill="#1272c4" />
        <path d="M0 11C1 4 6 0 12 0c7 0 12 5 12 10 0 4-3 6-6 6-2 0-4-1-3-3 1-3-1-5-4-5-5 0-9 2-11 3z" fill="url(#edge-top)" />
        <path d="M9 10c-3 6 1 12 8 12 2 0 4-1 5-3-4 2-10 1-9-5 0-2-1-4-4-4z" fill="#0b4f96" />
        <path d="M14 11c-2 2-1 5 2 6 2 1 5 1 6 0-1-1-3-1-4-1-2 0-4-1-3-3z" fill="#04192a" />
      </Icon>
    ),
  },
  {
    name: 'File Explorer',
    running: true,
    icon: (
      <Icon w={22} h={20} stroke="none">
        <path d="M0 1h8l2 2h11v5H0z" fill="#e5a72e" />
        <path d="M0 5h22v14H0z" fill="#fcd667" />
        <path d="M4 19v-6l2-2h10l2 2v6h-4v-4H8v4z" fill="#3f93d4" />
      </Icon>
    ),
  },
  {
    name: 'Firefox',
    icon: (
      <Icon w={24} h={24} stroke="none">
        <defs>
          <linearGradient id="fox" x1="1" x2="0" y2="1">
            <stop stopColor="#ffe135" />
            <stop offset=".5" stopColor="#ff7b2e" />
            <stop offset="1" stopColor="#f0246d" />
          </linearGradient>
        </defs>
        <path d="M3 4c1 1 2 2 4 2 2-1 4 0 5 0 0-2 1-5 3-6 0 3 3 4 5 6 3 3 4 6 3 9-1 5-6 9-11 9C6 24 1 20 1 13c0-4 1-6 2-9z" fill="url(#fox)" />
        <circle cx="12" cy="13" r="5.500" fill="#7040d8" />
        <path d="M6 9c3-1 5 0 7 2-2 2-3 1-4 1 1 3 5 3 8 0-1 6-9 8-12 3-1-3 0-5 1-6z" fill="#ff9b25" />
      </Icon>
    ),
  },
  {
    name: 'Chrome',
    running: true,
    icon: (
      <Icon w={24} h={24} stroke="none">
        <circle cx="12" cy="12" r="12" fill="#fbc116" />
        <path d="M1.600 6A12 12 0 0 1 22.400 6H12L6.800 15z" fill="#e33b2e" />
        <path d="M1.600 6A12 12 0 0 0 12 24l5.200-9-10.400 0z" fill="#2da94f" />
        <circle cx="12" cy="12" r="6" fill="#fff" />
        <circle cx="12" cy="12" r="4.600" fill="#3d7cf0" />
      </Icon>
    ),
  },
  { name: 'PlanMaker', running: true, active: true, icon: <SoftMakerIcon letter="P" color="#6eaa2a" /> },
  { name: 'Presentations', icon: <SoftMakerIcon letter="S" color="#f08332" /> },
  { name: 'TextMaker', icon: <SoftMakerIcon letter="T" color="#d5303a" /> },
];

function Taskbar() {
  return (
    <div className="flex h-10 shrink-0 bg-[linear-gradient(90deg,#001b24,#001520_50%,#020719)] text-white">
      <button aria-label="Start" className="flex w-12 shrink-0 items-center justify-center">
        <Icon stroke="none">
          <path d="M0 2.200L7 1.200V7.500H0zM8 1l8-1v7.500H8zM0 8.500h7v6.300l-7-1zM8 8.500h8V16l-8-1.100z" fill="#fff" />
        </Icon>
      </button>
      <label className="flex w-72 shrink-0 items-center gap-[11px] border border-[#c6c6c6] bg-[#f2f2f2] pl-[11px]">
        <Icon stroke="#222">
          <circle cx="10" cy="6" r="5.300" strokeWidth="1.300" />
          <path d="M6.300 9.700L.5 15.500" strokeWidth="1.300" />
        </Icon>
        <input
          aria-label="Search Windows"
          placeholder="Type here to search"
          className="w-full bg-transparent text-sm outline-none placeholder:text-[#444]"
        />
      </label>
      <button aria-label="Task view" className="flex w-12 shrink-0 items-center justify-center">
        <Icon w={17} stroke="#fff">
          <path d="M.5 0v3.500h10V0M.5 16v-3.500h10V16M.5 5.500h10v5H.5zM14.500 0v3M14.500 9v7" />
          <path d="M13 4h3v3h-3z" fill="#fff" stroke="none" />
        </Icon>
      </button>
      <div className="ml-[3px] flex gap-px">
        {TASKBAR_APPS.map((app) => (
          <button
            key={app.name}
            aria-label={app.name}
            className={clsx('relative flex w-12 items-center justify-center', app.active && 'bg-[#324650]')}
          >
            {app.icon}
            {app.running && (
              <span className={clsx('absolute bottom-0 h-[2px] bg-[#76b9ed]', app.active ? 'inset-x-0' : 'inset-x-1')} />
            )}
          </button>
        ))}
      </div>
      <div className="ml-auto flex items-center pr-1">
        <button aria-label="Hidden icons" className="flex w-6 justify-center">
          <Icon w={12} h={7} stroke="#fff"><path d="M.5 6.500L6 1l5.500 5.500" strokeWidth="1.200" /></Icon>
        </button>
        <button aria-label="Meet now" className="flex w-6 justify-center">
          <Icon w={12} h={16} stroke="#fff">
            <rect x="1.500" y="4.500" width="7" height="7" rx="1" />
            <path d="M8.500 7l2.500-1.500v5L8.500 9M2 2c2-2 5-2 7 0M2 14c2 2 5 2 7 0" />
          </Icon>
        </button>
        <button aria-label="Network" className="flex w-6 justify-center">
          <Icon w={17} h={15} stroke="#fff">
            <path d="M5 3.500h11.500v7H4M10.500 11v3M7 13.500h7M.5 1.500h4v4h-4zM2.500 5.500v8h2" />
          </Icon>
        </button>
        <button aria-label="Volume" className="flex w-6 justify-center">
          <Icon w={17} h={14} stroke="#fff">
            <path d="M.5 5v4H3l4 3.500v-11L3 5zM9 5c1 1 1 3 0 4M11.500 3c2 2 2 6 0 8M14 1c3 3 3 9 0 12" />
          </Icon>
        </button>
        <div className="flex w-16 flex-col items-center text-[11px] leading-[18px] whitespace-nowrap">
          <time>9:38 PM</time>
          <time>5/17/2025</time>
        </div>
        <button aria-label="Notifications" className="flex w-10 justify-center">
          <Icon w={17} stroke="#fff"><path d="M.5.5h16v12h-5L8.500 15.500l-3-3h-5z" strokeWidth="1.200" /></Icon>
        </button>
        <span className="ml-2 h-10 w-px bg-[#4c5863]" />
      </div>
    </div>
  );
}

export default function App() {
  return (
    <div className={clsx('flex h-screen flex-col overflow-hidden bg-[#eee]', UI_FONT)}>
      <Header />
      <Ribbon />
      <FormulaBar />
      <QuickBar />
      <main className="flex min-h-0 flex-1">
        <div className="flex min-w-0 flex-1 flex-col">
          <Sheet />
          <SheetTabs />
        </div>
        <VerticalScroll />
        <SidePanel />
      </main>
      <StatusBar />
      <Taskbar />
    </div>
  );
}
